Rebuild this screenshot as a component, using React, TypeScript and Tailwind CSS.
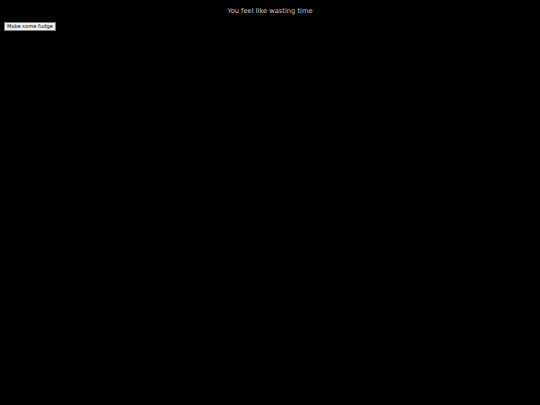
import React from "react";

const App: React.FC = () => {
  return (
    <div
      className="min-h-screen w-full bg-black text-[#cccccc]"
      style={{ fontFamily: '"DejaVu Sans", sans-serif' }}
    >
      <div className="pt-[6px] text-center text-[6.7px] leading-[10px]">
        You feel like wasting time
      </div>
      <div className="flex pl-[4px] pt-[6px]">
        <button className="h-[9px] border border-[#767676] bg-[#efefef] px-[2px] text-[5.2px] leading-[7px] text-black">
          Make some fudge
        </button>
      </div>
    </div>
  );
};

export default App;
